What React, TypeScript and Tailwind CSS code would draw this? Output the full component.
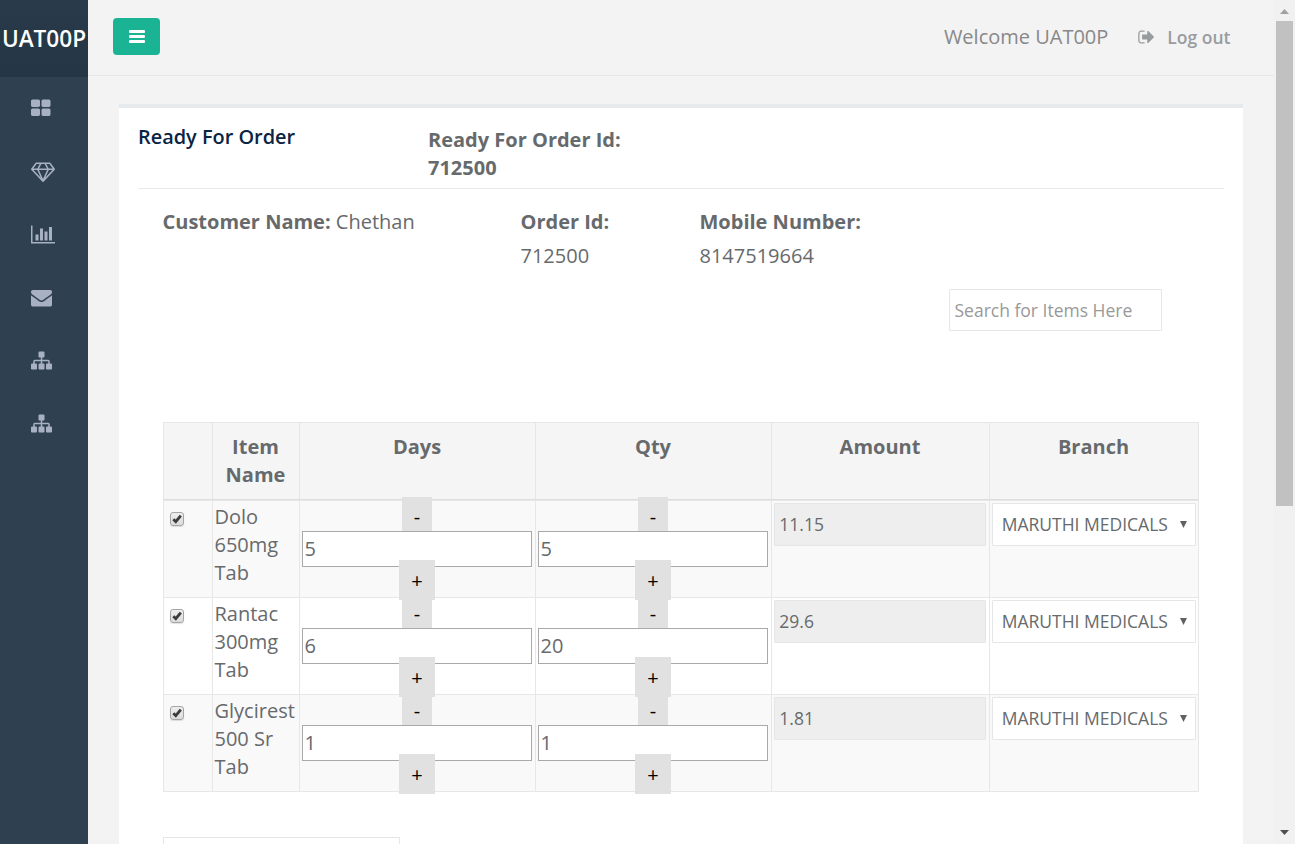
import React from "react";

const ICONS = {
  thLarge:
    "M768 1024v384q0 52-38 90t-90 38h-512q-52 0-90-38t-38-90v-384q0-52 38-90t90-38h512q52 0 90 38t38 90zm0-768v384q0 52-38 90t-90 38h-512q-52 0-90-38t-38-90v-384q0-52 38-90t90-38h512q52 0 90 38t38 90zm896 768v384q0 52-38 90t-90 38h-512q-52 0-90-38t-38-90v-384q0-52 38-90t90-38h512q52 0 90 38t38 90zm0-768v384q0 52-38 90t-90 38h-512q-52 0-90-38t-38-90v-384q0-52 38-90t90-38h512q52 0 90 38t38 90z",
  diamond:
    "M212 768l623 665-300-665h-323zm812 772l349-772h-698zm-486-900l204-384h-262l-288 384h346zm675 793l623-665h-323zm-530-793h682l-204-384h-274zm827 0h346l-288-384h-262zm141-486l384 512q14 18 13 41.500t-17 40.500l-960 1024q-18 20-47 20t-47-20l-960-1024q-16-17-17-40.500t13-41.500l384-512q18-26 51-26h1152q33 0 51 26z",
  barChart:
    "M640 896v512h-256v-512h256zm384-512v1024h-256v-1024h256zm1024 1152v128h-2048v-1536h128v1408h1920zm-640-896v768h-256v-768h256zm384-384v1152h-256v-1152h256z",
  envelope:
    "M1792 710v794q0 66-47 113t-113 47h-1472q-66 0-113-47t-47-113v-794q44 49 101 87 362 246 497 345 57 42 92.500 65.500t94.500 48 110 24.500h2q51 0 110-24.500t94.500-48 92.500-65.500q170-123 498-345 57-39 100-87zm0-294q0 79-49 151t-122 123q-376 261-468 325-10 7-42.500 31t-54 38.500-52 32.500-57.500 27-50 9h-2q-23 0-50-9t-57.500-27-52-32.500-54-38.500-42.500-31q-91-64-262-182.500t-205-142.500q-62-42-117-115.500t-55-136.500q0-78 41.500-130t118.500-52h1472q65 0 112.500 47t47.500 113z",
  sitemap:
    "M1792 1248v320q0 40-28 68t-68 28h-320q-40 0-68-28t-28-68v-320q0-40 28-68t68-28h96v-192h-512v192h96q40 0 68 28t28 68v320q0 40-28 68t-68 28h-320q-40 0-68-28t-28-68v-320q0-40 28-68t68-28h96v-192h-512v192h96q40 0 68 28t28 68v320q0 40-28 68t-68 28h-320q-40 0-68-28t-28-68v-320q0-40 28-68t68-28h96v-192q0-52 38-90t90-38h512v-192h-96q-40 0-68-28t-28-68v-320q0-40 28-68t68-28h320q40 0 68 28t28 68v320q0 40-28 68t-68 28h-96v192h512q52 0 90 38t38 90v192h96q40 0 68 28t28 68z",
  signOut:
    "M640 1440q0 4 1 20t.5 26.500-3 23.500-10 19.500-20.500 6.500h-320q-119 0-203.500-84.500t-84.500-203.500v-704q0-119 84.500-203.500t203.500-84.500h320q13 0 22.500 9.500t9.500 22.500q0 4 1 20t.5 26.500-3 23.500-10 19.500-20.500 6.500h-320q-66 0-113 47t-47 113v704q0 66 47 113t113 47h312l11.500 1 11.500 3 8 5.500 7 9 2 13.500zm928-544q0 26-19 45l-544 544q-19 19-45 19t-45-19-19-45v-288h-448q-26 0-45-19t-19-45v-384q0-26 19-45t45-19h448v-288q0-26 19-45t45-19 45 19l544 544q19 19 19 45z",
};

type IconName = keyof typeof ICONS;

function Icon({ name, className }: { name: IconName; className: string }) {
  return (
    <svg viewBox="0 0 2048 1792" className={className} fill="currentColor" aria-hidden="true">
      <path d={ICONS[name]} />
    </svg>
  );
}

const NAV: IconName[] = ["thLarge", "diamond", "barChart", "envelope", "sitemap", "sitemap"];

const ITEMS = [
  { name: ["Dolo", "650mg", "Tab"], days: 5, qty: 5, amount: "11.15" },
  { name: ["Rantac", "300mg", "Tab"], days: 6, qty: 20, amount: "29.6" },
  { name: ["Glycirest", "500 Sr", "Tab"], days: 1, qty: 1, amount: "1.81" },
];

function Sidebar() {
  return (
    <aside className="flex w-[88px] shrink-0 flex-col bg-[#2f4050]">
      <div className="flex h-[77px] items-center justify-center bg-linear-to-b from-[#293b4a] to-[#243544] pt-[2px] text-[22.600px] leading-none font-semibold whitespace-nowrap text-white">
        UAT00P
      </div>
      <nav className="flex flex-col gap-[42px] pt-[21.300px] pl-[31px] text-[#a7b1c2]">
        {NAV.map((n, i) => (
          <Icon key={i} name={n} className="h-[21px] w-6" />
        ))}
      </nav>
    </aside>
  );
}

function TopBar() {
  return (
    <header className="flex h-[76px] shrink-0 border-b border-[#e7e7e8] pl-[25px]">
      <button className="mt-[18px] flex h-[37px] w-[47px] items-center justify-center rounded-[4px] bg-[#1ab394]">
        <span className="flex w-4 flex-col gap-[2px]">
          <span className="h-[3px] rounded-[1px] bg-white" />
          <span className="h-[3px] rounded-[1px] bg-white" />
          <span className="h-[3px] rounded-[1px] bg-white" />
        </span>
      </button>
      <div className="ml-auto flex h-[74px] items-center pr-[43.500px]">
        <span className="text-[20px] text-[#888888]">Welcome UAT00P</span>
        <Icon name="signOut" className="ml-[30px] h-[18px] w-[21px] text-[#999c9e]" />
        <span className="ml-2 text-[17.500px] font-semibold text-[#999c9e]">Log out</span>
      </div>
    </header>
  );
}

function CheckMark() {
  return (
    <span className="mt-[9px] ml-1 flex size-[14px] items-center justify-center rounded-[3px] border border-[#a5a5a5] bg-linear-to-b from-[#eeeeee] to-[#dcdcdc] shadow-[0_1px_1px_rgba(0,0,0,0.12)]">
      <svg viewBox="0 0 12 12" className="size-3" fill="none" stroke="#3c3c3c" strokeWidth="2.800">
        <path d="M2.300 6.200 L4.800 8.700 L9.800 2.600" />
      </svg>
    </span>
  );
}

function Stepper({ value }: { value: number }) {
  return (
    <div className="flex flex-col items-center text-black">
      <button className="-mt-[6px] h-[34px] w-[30px] shrink-0 bg-[#e1e1e1] pt-[6px] text-[20px] leading-none">-</button>
      <div className="flex h-9 w-[230px] shrink-0 items-center border border-[#a9a9a9] bg-white px-[1.500px] text-[20px] text-[#676a6c]">
        {value}
      </div>
      <button className="relative -mt-[7px] -mb-[10px] h-10 w-9 shrink-0 bg-[#e1e1e1] pt-[2px] text-[20px] leading-none">
        +
      </button>
    </div>
  );
}

const HEAD = "border-l border-t border-[#e7e7e7] bg-[#f5f5f6] pt-[10px] pr-px text-center font-bold leading-7";

function ItemsTable() {
  return (
    <div className="w-[1036px] border-r border-b border-[#e7e7e7]">
      <div className="grid h-[77px] grid-cols-[49px_87px_236px_236px_218px_209px]">
        <div className={HEAD} />
        <div className={HEAD}>
          Item
          <br />
          Name
        </div>
        <div className={HEAD}>Days</div>
        <div className={HEAD}>Qty</div>
        <div className={HEAD}>Amount</div>
        <div className={HEAD}>Branch</div>
      </div>
      {ITEMS.map((item, i) => {
        const cell = "border-l border-t border-[#e7e7e7] pt-[2px] pl-[2px]";
        return (
          <div
            key={item.name[0]}
            className={
              "grid grid-cols-[49px_87px_236px_236px_218px_209px] " +
              (i === 0
                ? "h-[98px] border-t border-[#dddddd] bg-[#f9f9f9]"
                : i === 1
                  ? "h-[97px] bg-white"
                  : "h-[97px] bg-[#f9f9f9]")
            }
          >
            <div className={cell}>
              <CheckMark />
            </div>
            <div className={cell + " leading-7 whitespace-nowrap"}>
              {item.name.map((part) => (
                <div key={part} className="-ml-[0.500px]">
                  {part}
                </div>
              ))}
            </div>
            <div className={cell + " pr-[3px]"}>
              <Stepper value={item.days} />
            </div>
            <div className={cell + " pr-[3px]"}>
              <Stepper value={item.qty} />
            </div>
            <div className={cell}>
              <div className="flex h-[43px] w-[212px] items-center rounded-[1px] border border-[#e5e6e7] bg-[#eeeeee] pl-[4.300px] text-[17.500px]">
                {item.amount}
              </div>
            </div>
            <div className={cell}>
              <div className="flex h-[43px] w-[204px] items-center justify-between rounded-[1px] border border-[#e5e6e7] bg-white pr-2 pl-[8.700px] text-[17.500px] whitespace-nowrap">
                MARUTHI MEDICALS
                <svg viewBox="0 0 7 7" className="h-[7px] w-[7px]" fill="#5f6264">
                  <path d="M0 0H7L3.500 7Z" />
                </svg>
              </div>
            </div>
          </div>
        );
      })}
    </div>
  );
}

function OrderPanel() {
  return (
    <main className="mt-7 ml-[31px] flex w-[1124px] flex-1 flex-col border-t-4 border-[#e7eaec] bg-white px-[19px]">
      <div className="flex h-[81px] border-b border-[#e7eaec]">
        <h5 className="w-[290px] pt-[15px] text-[19.900px] leading-7 font-semibold text-[#0a2444]">
          Ready For Order
        </h5>
        <div className="pt-[18px] leading-7 font-bold">
          Ready For Order Id:
          <br />
          712500
        </div>
      </div>
      <div className="flex flex-col px-[25px]">
        <div className="-ml-[0.500px] flex pt-4 leading-[34px]">
          <div className="w-[358px]">
            <b className="font-bold">Customer Name:</b> Chethan
          </div>
          <div className="w-[179px]">
            <div className="font-bold">Order Id:</div>
            <div>712500</div>
          </div>
          <div>
            <div className="font-bold">Mobile Number:</div>
            <div>8147519664</div>
          </div>
        </div>
        <div className="mt-4 mr-[37px] flex h-[42px] w-[213px] items-center self-end rounded-[1px] border border-[#e5e6e7] pl-[4.500px] text-[17.500px] text-[#999999]">
          Search for Items Here
        </div>
        <div className="mt-[91px]">
          <ItemsTable />
        </div>
        <div className="mt-[45px] h-[43px] w-[237px] border border-[#e5e6e7]" />
      </div>
    </main>
  );
}

function ScrollTrack() {
  return (
    <div className="flex w-[21px] shrink-0 flex-col bg-[#f1f1f1] pr-[2px] pl-[2px]">
      <div className="flex h-[21px] justify-center pt-[9px]">
        <svg viewBox="0 0 9 5" className="h-[5px] w-[9px]" fill="#a0a0a0">
          <path d="M0 5L4.500 0L9 5Z" />
        </svg>
      </div>
      <div className="h-[485px] bg-[#c1c1c1]" />
      <div className="mt-auto flex h-[14px] justify-center">
        <svg viewBox="0 0 9 5" className="h-[5px] w-[9px]" fill="#505050">
          <path d="M0 0H9L4.500 5Z" />
        </svg>
      </div>
    </div>
  );
}

export default function App() {
  return (
    <div className="flex h-[844px] w-[1295px] overflow-hidden bg-[#f3f3f4] font-['Open_Sans',sans-serif] text-[20px] text-[#676a6c]">
      <Sidebar />
      <div className="flex min-w-0 flex-1 flex-col">
        <TopBar />
        <OrderPanel />
      </div>
      <ScrollTrack />
    </div>
  );
}
